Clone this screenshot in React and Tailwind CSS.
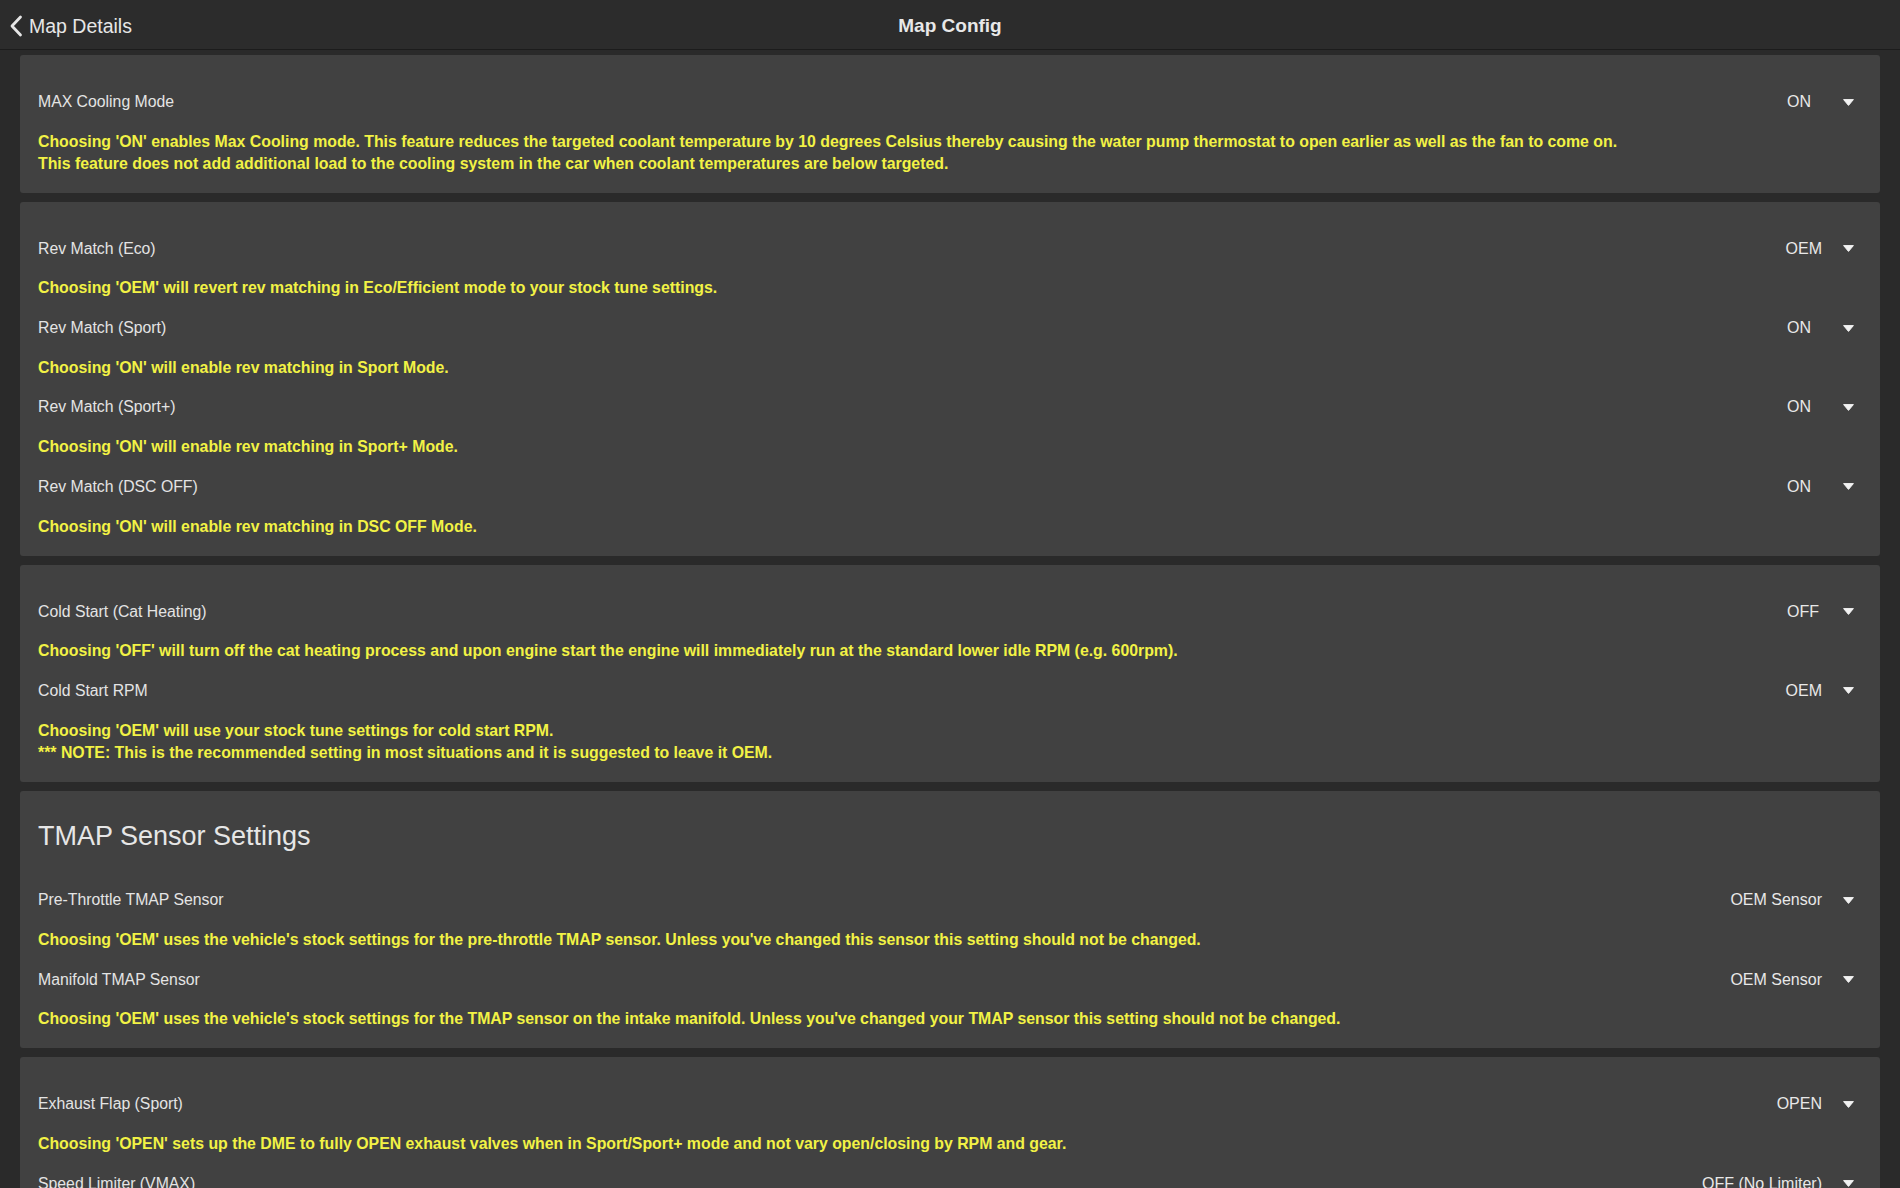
import React from "react";

const Caret = () => (
  <svg width="11" height="7" viewBox="0 0 11 7" className="shrink-0">
    <path d="M0.6 0.6 L10.4 0.6 L5.5 6.4 Z" fill="#f2f2f2" stroke="#f2f2f2" strokeWidth="1" strokeLinejoin="round" />
  </svg>
);

const Row = ({ label, value }) => (
  <div className="flex items-center h-[20px]">
    <div className="flex-1 text-[15.8px] leading-[20px] text-[#e4e4e4]">{label}</div>
    <div className="flex items-center gap-[21px]">
      <div className="min-w-[35px] text-left text-[16px] leading-[20px] text-[#e8e8e8] whitespace-nowrap">{value}</div>
      <Caret />
    </div>
  </div>
);

const Desc = ({ children }) => (
  <div className="text-[15.85px] leading-[22px] font-bold text-[#f2f245]">{children}</div>
);

const Card = ({ children, heading }) => (
  <div className="bg-[#414141] rounded-[3px] pt-[37px] pb-[18px] pl-[18px] pr-[26px] flex flex-col gap-[18.7px]">
    {heading && (
      <div className="text-[27px] leading-[20px] text-[#e6e6e6] mt-[-2px] mb-[26px]">{heading}</div>
    )}
    {children}
  </div>
);

export default function App() {
  return (
    <div
      className="w-full h-[1188px] overflow-hidden bg-[#2a2a2a] flex flex-col"
      style={{ fontFamily: '"Liberation Sans", Arial, sans-serif' }}
    >
      <div className="relative h-[50px] shrink-0 bg-[#2c2c2c] border-b border-[#1c1c1c] flex items-center pt-[2px]">
        <div className="flex items-center pl-[9px] gap-[6px]">
          <svg width="14" height="22" viewBox="0 0 14 22">
            <path d="M11.5 2 L3 11 L11.5 20" fill="none" stroke="#e6e6e6" strokeWidth="2.8" strokeLinecap="round" strokeLinejoin="round" />
          </svg>
          <span className="text-[19.5px] text-[#e6e6e6] leading-[22px]">Map Details</span>
        </div>
        <div className="absolute left-0 right-0 top-[2px] h-[49px] flex items-center justify-center pointer-events-none">
          <span className="text-[19px] font-bold text-[#e8e8e8]">Map Config</span>
        </div>
      </div>

      <div className="flex flex-col gap-[9px] px-[20px] pt-[5px]">
        <Card>
          <Row label="MAX Cooling Mode" value="ON" />
          <Desc>
            Choosing 'ON' enables Max Cooling mode. This feature reduces the targeted coolant temperature by 10 degrees Celsius thereby causing the water pump thermostat to open earlier as well as the fan to come on.
            <br />
            This feature does not add additional load to the cooling system in the car when coolant temperatures are below targeted.
          </Desc>
        </Card>

        <Card>
          <Row label="Rev Match (Eco)" value="OEM" />
          <Desc>Choosing 'OEM' will revert rev matching in Eco/Efficient mode to your stock tune settings.</Desc>
          <Row label="Rev Match (Sport)" value="ON" />
          <Desc>Choosing 'ON' will enable rev matching in Sport Mode.</Desc>
          <Row label="Rev Match (Sport+)" value="ON" />
          <Desc>Choosing 'ON' will enable rev matching in Sport+ Mode.</Desc>
          <Row label="Rev Match (DSC OFF)" value="ON" />
          <Desc>Choosing 'ON' will enable rev matching in DSC OFF Mode.</Desc>
        </Card>

        <Card>
          <Row label="Cold Start (Cat Heating)" value="OFF" />
          <Desc>Choosing 'OFF' will turn off the cat heating process and upon engine start the engine will immediately run at the standard lower idle RPM (e.g. 600rpm).</Desc>
          <Row label="Cold Start RPM" value="OEM" />
          <Desc>
            Choosing 'OEM' will use your stock tune settings for cold start RPM.
            <br />
            *** NOTE: This is the recommended setting in most situations and it is suggested to leave it OEM.
          </Desc>
        </Card>

        <Card heading="TMAP Sensor Settings">
          <Row label="Pre-Throttle TMAP Sensor" value="OEM Sensor" />
          <Desc>Choosing 'OEM' uses the vehicle's stock settings for the pre-throttle TMAP sensor. Unless you've changed this sensor this setting should not be changed.</Desc>
          <Row label="Manifold TMAP Sensor" value="OEM Sensor" />
          <Desc>Choosing 'OEM' uses the vehicle's stock settings for the TMAP sensor on the intake manifold. Unless you've changed your TMAP sensor this setting should not be changed.</Desc>
        </Card>

        <Card>
          <Row label="Exhaust Flap (Sport)" value="OPEN" />
          <Desc>Choosing 'OPEN' sets up the DME to fully OPEN exhaust valves when in Sport/Sport+ mode and not vary open/closing by RPM and gear.</Desc>
          <Row label="Speed Limiter (VMAX)" value="OFF (No Limiter)" />
          <Desc>Choosing 'OFF' removes the factory top speed limiter.</Desc>
        </Card>
      </div>
    </div>
  );
}
